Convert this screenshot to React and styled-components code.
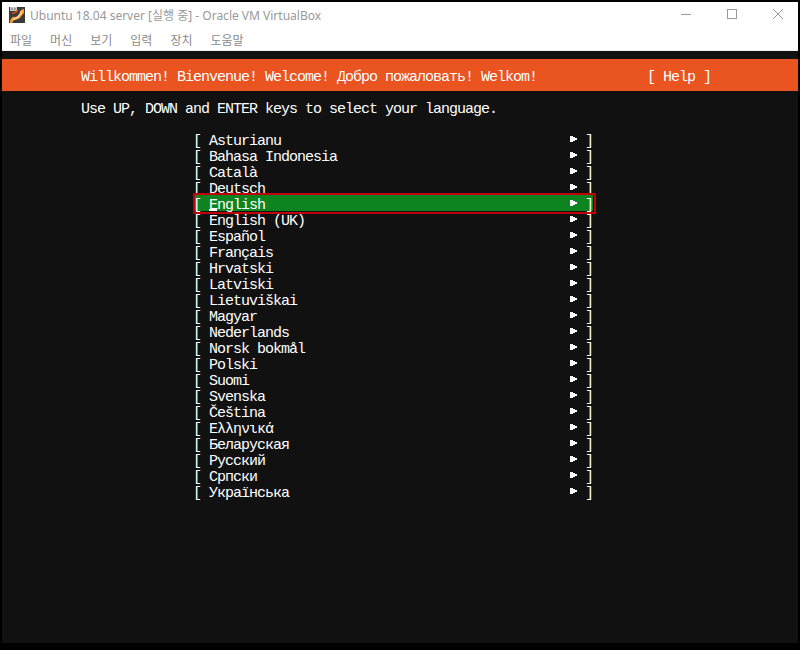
import React from "react";
import styled, { createGlobalStyle } from "styled-components";

const languages = [
  "Asturianu",
  "Bahasa Indonesia",
  "Català",
  "Deutsch",
  "English",
  "English (UK)",
  "Español",
  "Français",
  "Hrvatski",
  "Latviski",
  "Lietuviškai",
  "Magyar",
  "Nederlands",
  "Norsk bokmål",
  "Polski",
  "Suomi",
  "Svenska",
  "Čeština",
  "Ελληνικά",
  "Беларуская",
  "Русский",
  "Српски",
  "Українська",
];

const menus = ["파일", "머신", "보기", "입력", "장치", "도움말"];

const GlobalStyle = createGlobalStyle`
  html, body {
    margin: 0;
    padding: 0;
    background: #000;
  }
  * {
    box-sizing: border-box;
  }
`;

const Window = styled.div`
  width: 800px;
  height: 650px;
  padding: 2px 2px 7px 2px;
  background: #000;
  display: flex;
  flex-direction: column;
  overflow: hidden;
`;

const TitleBar = styled.div`
  height: 26px;
  background: #fff;
  display: flex;
  align-items: center;
  padding-left: 7px;
  font-family: "Noto Sans", "Noto Sans CJK KR", sans-serif;
  font-size: 12px;
  color: #999;
`;

const TitleText = styled.span`
  margin-left: 5px;
  flex: 1;
  white-space: nowrap;
`;

const WinButton = styled.div`
  width: 46px;
  height: 26px;
  display: flex;
  align-items: center;
  justify-content: flex-end;
  padding: 0 15px 2px 0;
`;

const MenuBar = styled.div`
  height: 23px;
  background: #fff;
  border-bottom: 1px solid #f0f0f0;
  display: flex;
  align-items: center;
  gap: 18px;
  padding: 1px 0 0 8px;
  font-family: "Noto Sans CJK KR", sans-serif;
  font-size: 12px;
  color: #8a8a8a;
`;

const Screen = styled.div`
  flex: 1;
  background: #111;
  padding-top: 8px;
  font-family: "Liberation Mono", "DejaVu Sans Mono", monospace;
  font-size: 15px;
  letter-spacing: -1px;
  line-height: 22px;
  color: #fff;
  white-space: pre;
`;

const Banner = styled.div`
  height: 32px;
  background: #e95420;
  display: flex;
  justify-content: space-between;
  align-items: flex-start;
  padding: 8px 87px 0 79px;
`;

const Hint = styled.div`
  height: 16px;
  margin: 8px 0 16px 79px;
`;

const List = styled.div`
  width: 400px;
  margin-left: 191px;
  display: flex;
  flex-direction: column;
`;

const Row = styled.div`
  position: relative;
  height: 16px;
  display: flex;
  justify-content: space-between;
  ${(p) =>
    p.$active &&
    `
    background: linear-gradient(#0e8420, #0e8420) 2px 0 / calc(100% - 2px) 100% no-repeat;
    &::after {
      content: "";
      position: absolute;
      top: -2px;
      left: 0;
      right: -3px;
      bottom: -3px;
      border: 2px solid #c00008;
    }
  `}
`;

const Mark = styled.span`
  position: relative;
  display: inline-block;
  &::after {
    content: "";
    position: absolute;
    top: 14px;
    left: 0;
    width: 8px;
    height: 2px;
    background: #fff;
  }
`;

const Arrow = styled.svg`
  width: 8px;
  height: 16px;
  display: block;
`;

const RowEnd = styled.span`
  display: flex;
`;

function AppIcon() {
  return (
    <svg width="16" height="16" viewBox="0 0 16 16">
      <rect width="16" height="16" fill="#3a3a3a" />
      <path d="M1 14 Q3 9 6 10 Q9 10 11 5 Q12 2 15 2 L15 6 Q13 8 11 11 Q8 13 5 13 L3 16 L1 16 Z" fill="#f79a2e" />
      <path d="M4 13 Q7 11 9 10 Q11 8 13 4" fill="none" stroke="#ffd9a0" strokeWidth="1.5" />
      <rect x="1" y="0" width="7" height="4" fill="#c9c9c9" />
      <path d="M2 2 H4 M5 2 H7" stroke="#777" />
      <path d="M3 6 Q6 7 9 3" fill="none" stroke="#e2491b" strokeWidth="1.6" />
    </svg>
  );
}

export default function App() {
  return (
    <Window>
      <GlobalStyle />
      <TitleBar>
        <AppIcon />
        <TitleText>Ubuntu 18.04 server [실행 중] - Oracle VM VirtualBox</TitleText>
        <WinButton>
          <svg width="10" height="10" viewBox="0 0 10 10">
            <path d="M0 5.5 H10" stroke="#999" />
          </svg>
        </WinButton>
        <WinButton>
          <svg width="10" height="10" viewBox="0 0 10 10">
            <rect x="0.5" y="0.5" width="9" height="9" fill="none" stroke="#999" />
          </svg>
        </WinButton>
        <WinButton>
          <svg width="10" height="10" viewBox="0 0 10 10">
            <path d="M0 0 L10 10 M10 0 L0 10" stroke="#999" />
          </svg>
        </WinButton>
      </TitleBar>
      <MenuBar>
        {menus.map((m) => (
          <span key={m}>{m}</span>
        ))}
      </MenuBar>
      <Screen>
        <Banner>
          <span>Willkommen! Bienvenue! Welcome! Добро пожаловать! Welkom!</span>
          <span>[ Help ]</span>
        </Banner>
        <Hint>Use UP, DOWN and ENTER keys to select your language.</Hint>
        <List>
          {languages.map((lang) => (
            <Row key={lang} $active={lang === "English"}>
              <span>
                {"[ "}
                {lang === "English" ? (
                  <>
                    <Mark>E</Mark>nglish
                  </>
                ) : (
                  lang
                )}
              </span>
              <RowEnd>
                <Arrow viewBox="0 0 8 16">
                  <path d="M1 5 H4 V6 H6 V7 H8 V9 H6 V10 H4 V11 H1 Z" fill="#fff" />
                </Arrow>
                {" ]"}
              </RowEnd>
            </Row>
          ))}
        </List>
      </Screen>
    </Window>
  );
}
